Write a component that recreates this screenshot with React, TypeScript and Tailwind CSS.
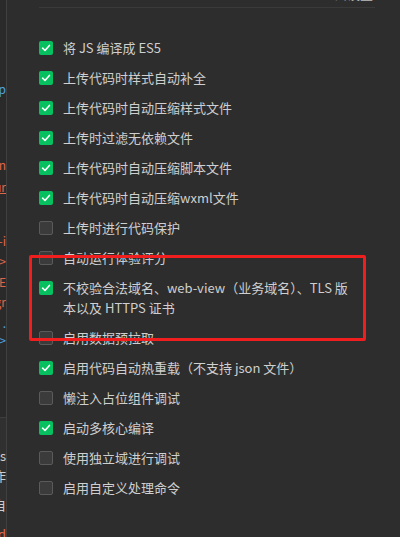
import React from "react";

type Item = { label: string; checked: boolean };

const items: Item[] = [
  { label: "将 JS 编译成 ES5", checked: true },
  { label: "上传代码时样式自动补全", checked: true },
  { label: "上传代码时自动压缩样式文件", checked: true },
  { label: "上传时过滤无依赖文件", checked: true },
  { label: "上传代码时自动压缩脚本文件", checked: true },
  { label: "上传代码时自动压缩wxml文件", checked: true },
  { label: "上传时进行代码保护", checked: false },
  { label: "自动运行体验评分", checked: false },
  { label: "不校验合法域名、web-view（业务域名）、TLS 版\n本以及 HTTPS 证书", checked: true },
  { label: "启用数据预拉取", checked: false },
  { label: "启用代码自动热重载（不支持 json 文件）", checked: true },
  { label: "懒注入占位组件调试", checked: false },
  { label: "启动多核心编译", checked: true },
  { label: "使用独立域进行调试", checked: false },
  { label: "启用自定义处理命令", checked: false },
];

function Box({ checked }: { checked: boolean }) {
  if (checked) {
    return (
      <div className="mt-[3px] flex h-[14px] w-[14px] shrink-0 items-center justify-center rounded-[2px] bg-[#07c160]">
        <svg width="10" height="10" viewBox="0 0 10 10" fill="none">
          <path d="M1.6 5.2 L4 7.5 L8.4 2.4" stroke="#ffffff" strokeWidth="1.6" strokeLinecap="round" strokeLinejoin="round" />
        </svg>
      </div>
    );
  }
  return <div className="mt-[3px] h-[14px] w-[14px] shrink-0 rounded-[2px] border border-[#5a5a5a] bg-[#3b3b3b]" />;
}

const codeBits: { y: number; t: string; c: string; u?: boolean }[] = [
  { y: 82, t: "op", c: "text-[#4fa3e0]" },
  { y: 158, t: "ın", c: "text-[#e0664a]" },
  { y: 180, t: "ır", c: "text-[#e0664a]", u: true },
  { y: 234, t: "-i", c: "text-[#e0664a]" },
  { y: 254, t: "o>", c: "text-[#e0664a]" },
  { y: 275, t: "oE", c: "text-[#e0664a]" },
  { y: 295, t: "gr", c: "text-[#e0664a]" },
  { y: 316, t: ".", c: "text-[#4fa3e0]" },
  { y: 333, t: "x>", c: "text-[#4fa3e0]" },
  { y: 448, t: "s", c: "text-[#cfcfcf]" },
  { y: 468, t: "作", c: "text-[#cfcfcf]" },
  { y: 497, t: "自", c: "text-[#cfcfcf]" },
  { y: 526, t: "d", c: "text-[#e0664a]" },
];

export default function App() {
  return (
    <div
      className="relative flex h-[537px] w-[400px] overflow-hidden bg-[#2d2d2d]"
      style={{ fontFamily: '"Noto Sans CJK SC", "Noto Sans", sans-serif' }}
    >
      {/* left editor strip */}
      <div className="relative flex h-full w-[6px] shrink-0 flex-col overflow-hidden">
        <div className="relative h-[417px] w-full bg-[#2a2a2a]">
          {codeBits
            .filter((b) => b.y < 417)
            .map((b, i) => (
              <div
                key={i}
                className={`absolute right-0 whitespace-nowrap text-[12px] leading-[14px] ${b.c} ${b.u ? "underline" : ""}`}
                style={{ top: b.y }}
              >
                {b.t}
              </div>
            ))}
        </div>
        <div className="h-px w-full bg-[#3e3e3e]" />
        <div className="relative flex-1 w-full bg-[#303030]">
          {codeBits
            .filter((b) => b.y >= 417)
            .map((b, i) => (
              <div
                key={i}
                className={`absolute right-0 whitespace-nowrap text-[13px] leading-[16px] ${b.c}`}
                style={{ top: b.y - 418 }}
              >
                {b.t}
              </div>
            ))}
        </div>
      </div>
      <div className="h-full w-px shrink-0 bg-[#404040]" />

      {/* settings panel */}
      <div className="flex flex-1 flex-col pl-[32px] pr-[25px] pt-0">
        <div className="relative flex h-[7px] justify-end">
          <span className="absolute -top-[13px] right-[2px] text-[13px] leading-[14px] text-[#bdbdbd]">
            去设置
          </span>
        </div>
        <div className="h-px w-full bg-[#3a3a3a]" />
        <div className="mt-[30px] flex flex-col gap-[10px]">
          {items.map((it, i) => (
            <div key={i} className="flex items-start gap-[10px]">
              <Box checked={it.checked} />
              <div className="w-[300px] whitespace-pre-line text-[13px] leading-[20px] text-[#cfcfcf]">{it.label}</div>
            </div>
          ))}
        </div>
      </div>

      {/* annotation */}
      <div className="pointer-events-none absolute left-[29px] top-[255px] h-[86px] w-[337px] rounded-[2px] border-[3px] border-[#f01e1e]" />
    </div>
  );
}
